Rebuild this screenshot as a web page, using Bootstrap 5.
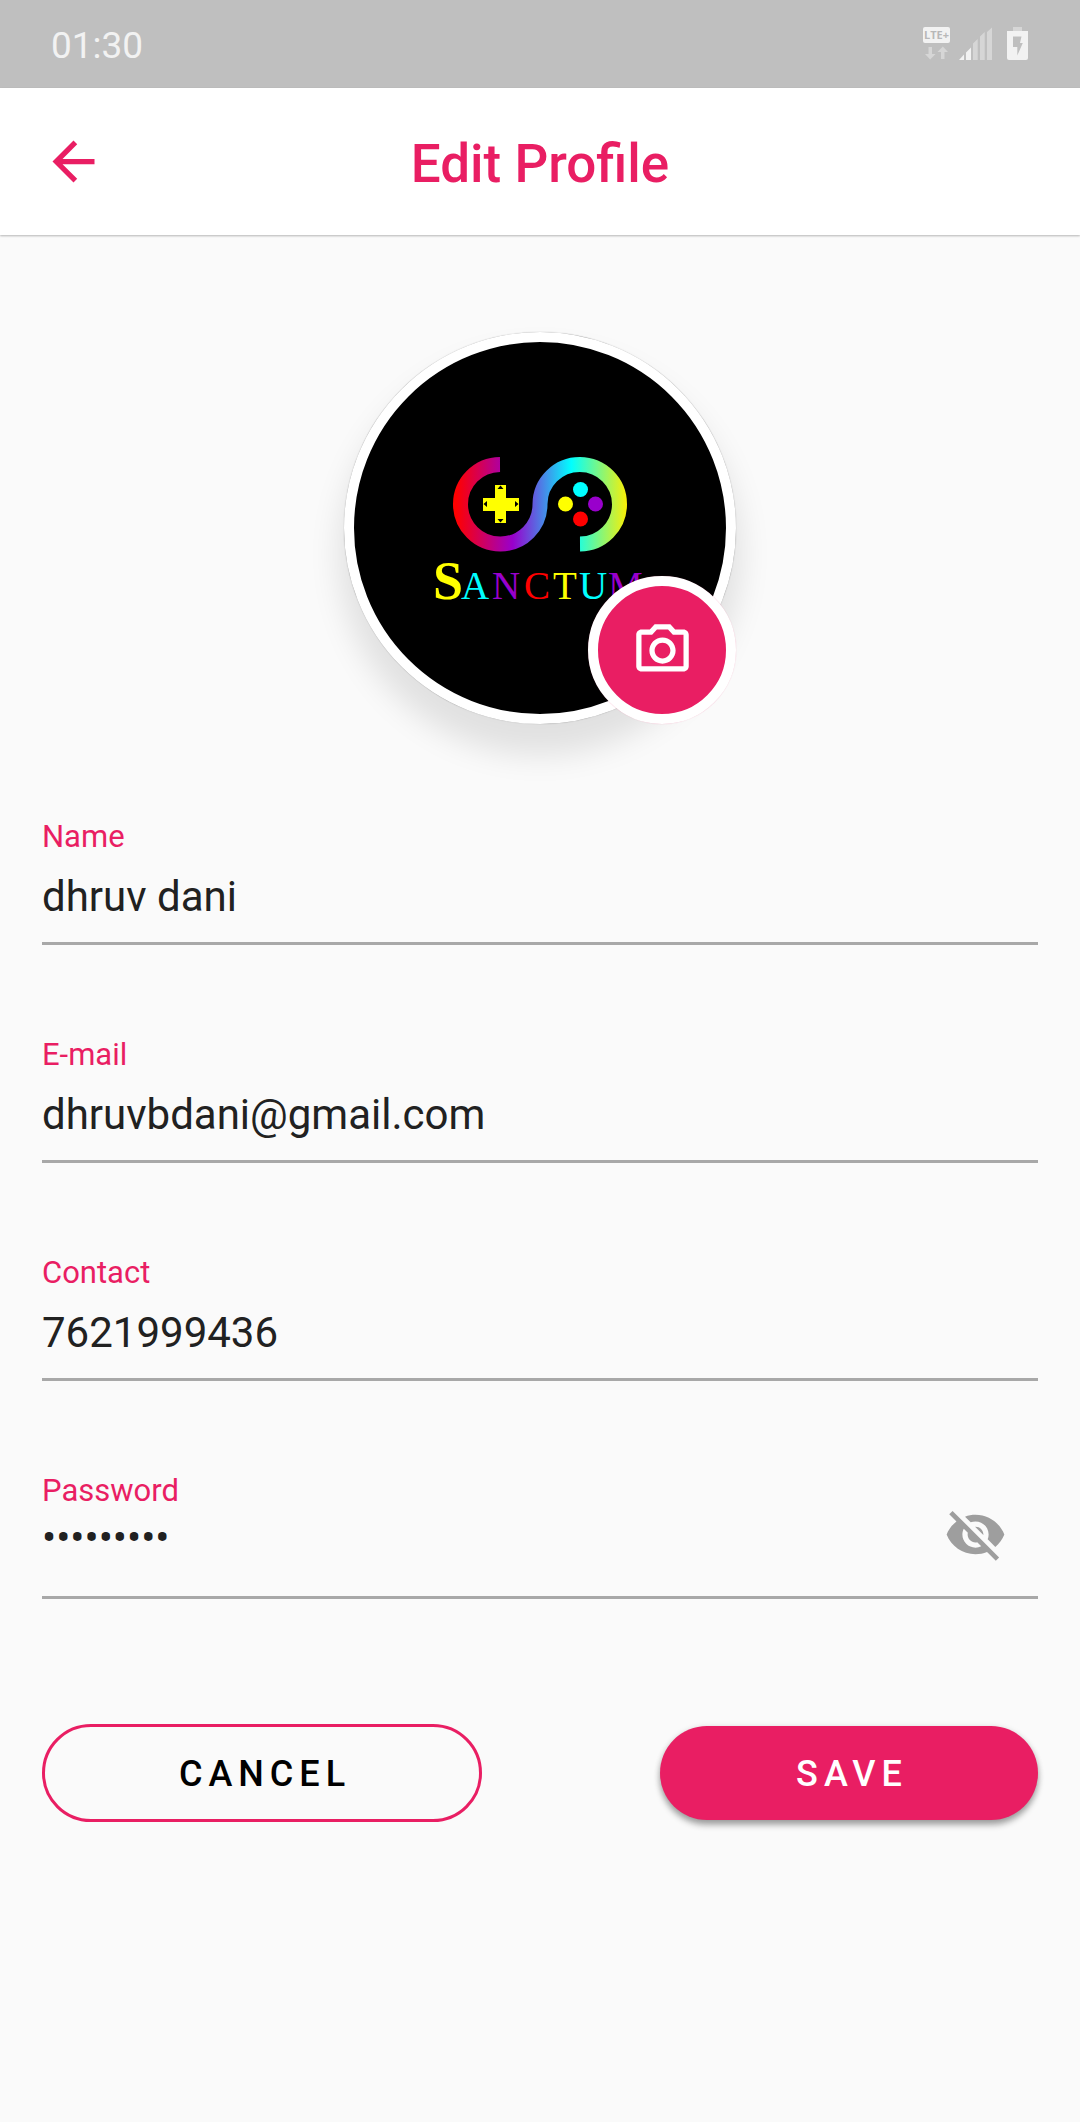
<!DOCTYPE html>
<html lang="en">
<head>
<meta charset="utf-8">
<meta name="viewport" content="width=device-width, initial-scale=1">
<title>Edit Profile</title>
<link href="https://cdn.jsdelivr.net/npm/bootstrap@5.3.0/dist/css/bootstrap.min.css" rel="stylesheet">
<style>
  :root { --accent: #e91e63; --page: #fafafa; }
  body { background: var(--page); font-family: Roboto, "Noto Sans", sans-serif; color: #212121; }
  .status-bar { background: #bfbfbf; color: #f2f2f2; height: 88px; padding: 0 51px; font-size: 37px; line-height: 44px; }
  .status-clock { padding-top: 3px; }
  .app-bar { background: #fff; height: 147px; padding: 0 42px; box-shadow: 0 1px 2px rgba(0, 0, 0, .28); }
  .app-title { color: var(--accent); font-size: 53px; line-height: 60px; font-weight: 500; padding-top: 4px; }
  .bar-action { width: 63px; height: 63px; color: var(--accent); }
  .page-body { padding: 97px 42px 42px; }
  .avatar { width: 392px; height: 392px; border: 10px solid #fff; background: #000; box-shadow: 0 26px 31px 5px rgba(0, 0, 0, .1), 0 0 1px rgba(0, 0, 0, .4); }
  .avatar-edit { right: -10px; bottom: -10px; width: 148px; height: 148px; border: 10px solid #fff; background: var(--accent); color: #fff; box-shadow: 0 0 1px rgba(233, 30, 99, .4); }
  .profile-form { margin-top: 94px; }
  .fields { gap: 91px; }
  .field-label { color: var(--accent); font-size: 31px; line-height: 37px; }
  .field-box { height: 90px; border-bottom: 3px solid #a8a8a8; }
  .field-input { font-size: 42px; line-height: 49px; padding: 17px 0 21px; border: 0; outline: 0; background: transparent; color: #212121; }
  .field-input-secret { padding: 4px 0 34px; }
  .reveal { width: 126px; height: 50px; color: #9e9e9e; }
  .actions { margin-top: 125px; }
  .action-btn { --bs-btn-font-size: 36px; --bs-btn-line-height: 44px; --bs-btn-font-weight: 500; --bs-btn-padding-x: 0; letter-spacing: 6px; text-indent: 6px; padding-top: 8px; }
  .action-cancel { width: 440px; height: 98px; border: 3px solid var(--accent); color: #000; }
  .action-save { width: 378px; height: 94px; background: var(--accent); color: #fff; border: 0; box-shadow: 0 5px 6px rgba(0, 0, 0, .32), 0 1px 6px rgba(0, 0, 0, .12); }
  .action-cancel:hover { border-color: var(--accent); color: var(--accent); }
  .action-save:hover { background: #d81b60; color: #fff; }
</style>
</head>
<body>
<div class="status-bar d-flex align-items-center justify-content-between">
  <span class="status-clock">01:30</span>
  <svg width="106" height="34" viewBox="43 27 106 34" fill="#f2f2f2" role="img" aria-label="LTE+, signal, charging">
    <rect x="43" y="27" width="27" height="16" rx="2"/>
    <text x="56.5" y="39" font-family="Open Sans" font-size="11" font-weight="700" text-anchor="middle" fill="#b8b8b8">LTE+</text>
    <g fill="#d6d6d6">
      <path d="M48.500 47h3.500v7h3.500l-5.300 5.500-5.200-5.500h3.500zM61 59h3.500v-7H68l-5.200-5.500L57.500 52H61z"/>
      <path d="M93 43.500l4.700-4.600V60H93zM100 36.500l4.700-4.600V60H100zM107 32l5-4.500V60h-5z"/>
    </g>
    <path d="M79 60l5-5.500V60zM86 52.500l5-5V60h-5z"/>
    <path d="M133 27h9v4h-9z" fill="#d6d6d6"/>
    <path d="M127 31h21v27a2 2 0 0 1-2 2h-17a2 2 0 0 1-2-2z"/>
    <path d="M133 36.500h8.500L140 43h2.800l-5.500 12.500V47H133z" fill="#bfbfbf"/>
  </svg>
</div>

<header class="app-bar d-flex align-items-center justify-content-between">
  <button type="button" class="btn p-0 border-0 bar-action d-flex" aria-label="Back">
    <svg width="63" height="63" viewBox="0 0 24 24" fill="currentColor"><path d="M20 11H7.830l5.590-5.590L12 4l-8 8 8 8 1.410-1.410L7.830 13H20v-2z"/></svg>
  </button>
  <h1 class="app-title mb-0">Edit Profile</h1>
  <span class="bar-action"></span>
</header>

<main class="page-body">
  <div class="avatar rounded-circle position-relative mx-auto">
    <svg class="d-block" width="372" height="372" viewBox="354 342 372 372" role="img" aria-label="Sanctum logo">
      <defs>
        <linearGradient id="rainbow" gradientUnits="userSpaceOnUse" x1="456" y1="0" x2="628" y2="0">
          <stop offset="0" stop-color="#ff0000"/>
          <stop offset=".33" stop-color="#9900cc"/>
          <stop offset=".67" stop-color="#00ffff"/>
          <stop offset="1" stop-color="#ffee00"/>
        </linearGradient>
      </defs>
      <path d="M500 464.500A39.750 39.750 0 1 0 540 504A39.750 39.750 0 1 1 580 544" fill="none" stroke="url(#rainbow)" stroke-width="15"/>
      <path d="M495 485h11v13h13v13h-13v12h-11v-12h-12v-13h12z" fill="#ff0"/>
      <path d="M500.500 485.500l3 3.500h-6zM500.500 522.500l3-3.500h-6zM483.500 504l3.500-3v6zM518.500 504l-3.500-3v6z" fill="#000"/>
      <circle cx="580.500" cy="489.500" r="7.500" fill="#0ff"/>
      <circle cx="565.500" cy="504" r="7.500" fill="#ff0"/>
      <circle cx="595.500" cy="504" r="7.500" fill="#90c"/>
      <circle cx="580.500" cy="519" r="7.500" fill="#f00"/>
      <text y="599" font-family="Liberation Serif" font-size="39"><tspan x="433" font-size="54" font-weight="700" fill="#ff0">S</tspan><tspan x="461" fill="#0ff">A</tspan><tspan x="492" fill="#90c">N</tspan><tspan x="524" fill="#f00">C</tspan><tspan x="553" fill="#ff0">T</tspan><tspan x="579" fill="#0ff">U</tspan><tspan x="608" fill="#90c">M</tspan></text>
    </svg>
    <button type="button" class="avatar-edit btn p-0 rounded-circle position-absolute d-flex align-items-center justify-content-center" aria-label="Change photo">
      <svg width="63" height="63" viewBox="0 0 24 24" fill="currentColor"><path d="M20 4h-3.170L15 2H9L7.170 4H4c-1.100 0-2 .9-2 2v12c0 1.100.9 2 2 2h16c1.100 0 2-.9 2-2V6c0-1.100-.9-2-2-2zm0 14H4V6h4.050l1.830-2h4.240l1.830 2H20v12zM12 7c-2.760 0-5 2.240-5 5s2.240 5 5 5 5-2.240 5-5-2.240-5-5-5zm0 8c-1.650 0-3-1.350-3-3s1.350-3 3-3 3 1.350 3 3-1.350 3-3 3z"/></svg>
    </button>
  </div>

  <form class="profile-form">
    <div class="fields d-flex flex-column">
      <div>
        <label class="field-label d-block" for="name">Name</label>
        <div class="field-box d-flex"><input class="field-input w-100" id="name" type="text" value="dhruv dani"></div>
      </div>
      <div>
        <label class="field-label d-block" for="email">E-mail</label>
        <div class="field-box d-flex"><input class="field-input w-100" id="email" type="email" value="dhruvbdani@gmail.com" spellcheck="false"></div>
      </div>
      <div>
        <label class="field-label d-block" for="contact">Contact</label>
        <div class="field-box d-flex"><input class="field-input w-100" id="contact" type="tel" value="7621999436"></div>
      </div>
      <div>
        <label class="field-label d-block" for="password">Password</label>
        <div class="field-box d-flex align-items-start">
          <input class="field-input field-input-secret flex-grow-1" id="password" type="password" value="sanctum12">
          <button type="button" class="reveal btn p-0 border-0 d-flex align-items-center justify-content-center" aria-label="Show password">
            <svg class="flex-shrink-0" width="63" height="63" viewBox="0 0 24 24" fill="currentColor"><path d="M12 7c2.760 0 5 2.240 5 5 0 .65-.13 1.260-.36 1.830l2.920 2.920c1.510-1.260 2.700-2.890 3.430-4.750-1.730-4.390-6-7.500-11-7.500-1.400 0-2.740.25-3.980.7l2.160 2.160C10.740 7.130 11.350 7 12 7zM2 4.270l2.280 2.280.46.46C3.080 8.300 1.780 10.020 1 12c1.730 4.390 6 7.500 11 7.500 1.550 0 3.030-.3 4.380-.84l.42.42L19.730 22 21 20.730 3.270 3 2 4.270zM7.530 9.800l1.550 1.550c-.05.21-.08.43-.08.65 0 1.660 1.340 3 3 3 .22 0 .44-.03.65-.08l1.550 1.550c-.67.33-1.410.53-2.200.53-2.760 0-5-2.240-5-5 0-.79.2-1.530.53-2.200zm4.310-.78l3.150 3.150.02-.16c0-1.660-1.340-3-3-3l-.17.01z"/></svg>
          </button>
        </div>
      </div>
    </div>
    <div class="actions d-flex align-items-center justify-content-between">
      <button type="button" class="btn rounded-pill action-btn action-cancel">CANCEL</button>
      <button type="submit" class="btn rounded-pill action-btn action-save">SAVE</button>
    </div>
  </form>
</main>
<script src="https://cdn.jsdelivr.net/npm/bootstrap@5.3.0/dist/js/bootstrap.bundle.min.js"></script>
</body>
</html>
